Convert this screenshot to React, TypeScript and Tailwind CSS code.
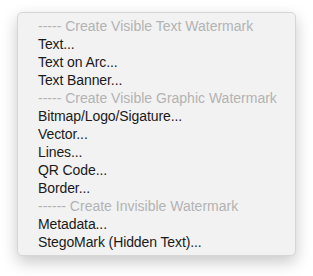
const items: { label: string; header?: boolean }[] = [
  { label: '----- Create Visible Text Watermark', header: true },
  { label: 'Text...' },
  { label: 'Text on Arc...' },
  { label: 'Text Banner...' },
  { label: '----- Create Visible Graphic Watermark', header: true },
  { label: 'Bitmap/Logo/Sigature...' },
  { label: 'Vector...' },
  { label: 'Lines...' },
  { label: 'QR Code...' },
  { label: 'Border...' },
  { label: '------ Create Invisible Watermark', header: true },
  { label: 'Metadata...' },
  { label: 'StegoMark (Hidden Text)...' },
]

export default function App() {
  return (
    <div className="w-[313px] h-[276px] bg-white pt-[12px] pl-[17px] font-['Helvetica','Liberation_Sans',sans-serif]">
      <div className="w-[279px] py-[4px] bg-[#f2f2f2] rounded-[5px] border border-[#d6d6d6] shadow-[0_6px_16px_rgba(0,0,0,0.22)]">
        {items.map((it) => (
          <div key={it.label}
            className={`h-[18px] leading-[18px] pl-[20px] text-[14px] ${it.header ? 'text-[#b3b3b3]' : 'text-[#1a1a1a] tracking-[-0.1px]'}`}>
            {it.label}
          </div>
        ))}
      </div>
    </div>
  )
}
